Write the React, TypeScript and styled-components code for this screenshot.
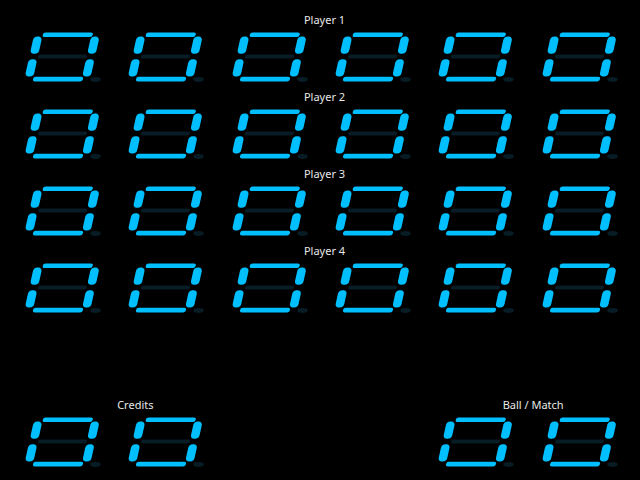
import { FC } from "react"
import styled, { createGlobalStyle } from "styled-components"

const ON = "#00bfff"
const OFF = "#071c24"

// segment order: top, upper-right, lower-right, bottom, lower-left, upper-left, middle
const PATTERNS: Record<string, boolean[]> = {
	"0": [true, true, true, true, true, true, false],
	"1": [false, true, true, false, false, false, false],
}

const GlobalStyle = createGlobalStyle`
	html, body {
		margin: 0;
		padding: 0;
		background: #000;
	}
`

const Digit: FC<{ value: string }> = ({ value }) => {
	const lit = PATTERNS[value] ?? PATTERNS["0"]
	const c = (i: number) => (lit[i] ? ON : OFF)

	return (
		<svg width="103.33" height="61" viewBox="0 0 103.33 61">
			<g transform="translate(0 28.5) skewX(-12.4) translate(0 -28.5)">
				<rect x="38" y="4.5" width="50" height="4.6" rx="2.3" fill={c(0)} />
				<rect x="86.6" y="8.6" width="8.6" height="17.2" rx="3.8" fill={c(1)} />
				<rect x="86.6" y="31.2" width="8.6" height="17.4" rx="3.8" fill={c(2)} />
				<rect x="38" y="48.8" width="50" height="4.6" rx="2.3" fill={c(3)} />
				<rect x="29.3" y="31.2" width="8.6" height="17.4" rx="3.8" fill={c(4)} />
				<rect x="29.3" y="8.6" width="8.6" height="17.2" rx="3.8" fill={c(5)} />
				<rect x="38" y="26.6" width="49" height="4" rx="2" fill={c(6)} />
			</g>
			<ellipse cx="95.5" cy="51.5" rx="5.2" ry="2.4" fill={OFF} />
		</svg>
	)
}

const App: FC = () => {
	const players = ["Player 1", "Player 2", "Player 3", "Player 4"]

	return (
		<Screen>
			<GlobalStyle />
			{players.map((name) => (
				<Group key={name}>
					<Label $offset={9}>{name}</Label>
					<DigitRow>
						{[0, 1, 2, 3, 4, 5].map((i) => <Digit key={i} value="0" />)}
					</DigitRow>
				</Group>
			))}

			<Spacer />

			<BottomRow>
				<Group $column="1 / 3">
					<Label $offset={64}>Credits</Label>
					<DigitRow>
						<Digit value="0" />
						<Digit value="0" />
					</DigitRow>
				</Group>
				<Group $column="5 / 7">
					<Label $offset={33}>Ball / Match</Label>
					<DigitRow>
						<Digit value="0" />
						<Digit value="0" />
					</DigitRow>
				</Group>
			</BottomRow>
		</Screen>
	)
}

const Screen = styled.div`
	/* Layout */
	width: 640px;
	height: 480px;
	padding-top: 12px;
	box-sizing: border-box;
	display: flex;
	flex-direction: column;
	overflow: hidden;

	/* Color */
	background: #000;
`

const Group = styled.div<{ $column?: string }>`
	display: flex;
	flex-direction: column;
	grid-column: ${(p) => p.$column ?? "auto"};
`

const Label = styled.div<{ $offset: number }>`
	/* Layout */
	height: 16px;
	padding-left: ${(p) => p.$offset}px;
	text-align: center;

	/* Text */
	font-family: "Noto Sans", "DejaVu Sans", sans-serif;
	font-size: 11px;
	line-height: 16px;
	color: #e8e8e8;
`

const DigitRow = styled.div`
	display: flex;
	height: 61px;

	svg {
		display: block;
		flex: none;
	}
`

const Spacer = styled.div`
	height: 77px;
	flex: none;
`

const BottomRow = styled.div`
	display: grid;
	grid-template-columns: repeat(6, 103.33px);
`

export default App
